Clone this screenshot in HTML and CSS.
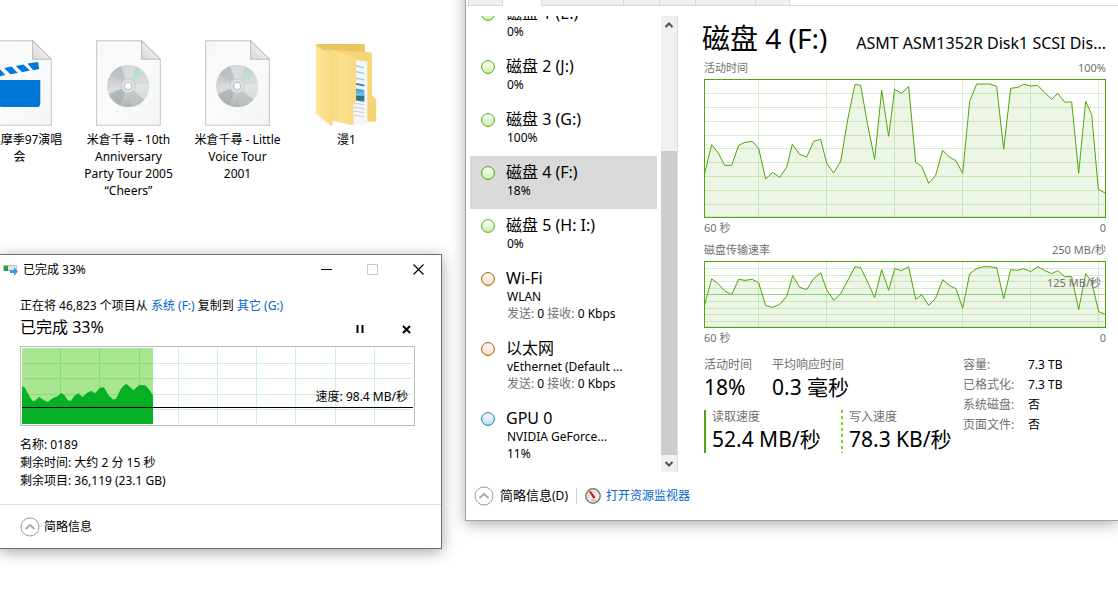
FILE: index.html
```html
<!DOCTYPE html>
<html lang="zh-CN">
<head>
<meta charset="utf-8">
<title>桌面</title>
<link rel="stylesheet" href="styles.css">
</head>
<body>
<div class="desktop">
  <svg class="defs" width="0" height="0" aria-hidden="true">
    <defs>
      <linearGradient id="paper" x1="0" y1="0" x2="1" y2="1"><stop offset="0" stop-color="#f6f7f7"/><stop offset=".5" stop-color="#fafbfb"/><stop offset="1" stop-color="#f2f4f7"/></linearGradient>
      <linearGradient id="fold" x1="0" y1="1" x2=".7" y2=".3"><stop offset="0" stop-color="#d6d6d6"/><stop offset="1" stop-color="#f4f4f4"/></linearGradient>
      <linearGradient id="silver" x1=".3" y1="0" x2=".6" y2="1"><stop offset="0" stop-color="#bcc3c4"/><stop offset=".5" stop-color="#d9dddd"/><stop offset="1" stop-color="#a9adad"/></linearGradient>
      <linearGradient id="flapA" x1="0" y1="0" x2="1" y2="0"><stop offset="0" stop-color="#ffe69a"/><stop offset="1" stop-color="#f8d87b"/></linearGradient>
      <linearGradient id="flapB" x1="0" y1="0" x2="1" y2="0"><stop offset="0" stop-color="#f3d077"/><stop offset=".5" stop-color="#fbdf8c"/><stop offset="1" stop-color="#f9d97d"/></linearGradient>
      <linearGradient id="photo" x1="0" y1="0" x2="0" y2="1"><stop offset="0" stop-color="#2f93d8"/><stop offset=".5" stop-color="#79c4ec"/><stop offset=".6" stop-color="#3f7068"/><stop offset="1" stop-color="#2276b4"/></linearGradient>
      <linearGradient id="dotGreen" x1="0" y1="0" x2="0" y2="1"><stop offset="0" stop-color="#fff"/><stop offset="1" stop-color="#c9f2ac"/></linearGradient>
      <linearGradient id="dotBrown" x1="0" y1="0" x2="0" y2="1"><stop offset="0" stop-color="#fff"/><stop offset="1" stop-color="#fbdcc4"/></linearGradient>
      <linearGradient id="dotBlue" x1="0" y1="0" x2="0" y2="1"><stop offset="0" stop-color="#fff"/><stop offset="1" stop-color="#b9dcf4"/></linearGradient>
      <symbol id="disc-file" viewBox="288 31 194 256">
        <path d="M290 33h134l56 55v197H290z" fill="url(#paper)" stroke="#c3c3c3" stroke-width="3"/>
        <path d="M424 33v55h56z" fill="url(#fold)" stroke="#bdbdbd" stroke-width="3"/>
        <circle cx="384" cy="168" r="63" fill="url(#silver)"/>
        <path d="M384 168L330 136A63 63 0 0 1 362 109z" fill="#b3babb" opacity=".55"/>
        <path d="M384 168L362 109A63 63 0 0 1 408 110z" fill="#e6eaea" opacity=".5"/>
        <path d="M384 168L446 158A63 63 0 0 1 432 209z" fill="#eef0f0" opacity=".6"/>
        <path d="M384 168L432 209A63 63 0 0 1 392 231z" fill="#c2c6c6" opacity=".7"/>
        <path d="M384 168L360 226A63 63 0 0 1 326 192z" fill="#a0a5a5" opacity=".6"/>
        <path d="M384 168L324 150A63 63 0 0 1 328 142z" fill="#e6b5e6" opacity=".9"/>
        <path d="M384 168L419 118A63 63 0 0 1 428 124z" fill="#a8ebb8" opacity=".9"/>
        <circle cx="384" cy="168" r="21" fill="#dfe3e3" stroke="#c7cccc" stroke-width="3"/>
        <circle cx="384" cy="168" r="11" fill="#fff" stroke="#bdc5c5" stroke-width="4"/>
      </symbol>
    </defs>
  </svg>

  <div class="files">
    <div class="file">
      <svg class="file-icon" viewBox="-39 31 194 256" aria-hidden="true">
        <path d="M-37 33H97l56 55v197H-37z" fill="url(#paper)" stroke="#c3c3c3" stroke-width="3"/>
        <path d="M97 33v55h56z" fill="url(#fold)" stroke="#bdbdbd" stroke-width="3"/>
        <path d="M-4 150H120v70q0 11-11 11H7q-11 0-11-11z" fill="#0078d7"/>
        <path d="M82 101l31-5 4 21-18 4zM47 108l23-4 19 18-23 5zM12 114l22-4 19 19-22 4zM-6 118l5-1 17 18-21 5z" fill="#0078d7"/>
      </svg>
      <span class="file-name">大黑摩季97演唱<br>会</span>
    </div>
    <div class="file">
      <svg class="file-icon" aria-hidden="true"><use href="#disc-file"/></svg>
      <span class="file-name">米倉千尋 - 10th<br>Anniversary<br>Party Tour 2005<br>“Cheers”</span>
    </div>
    <div class="file">
      <svg class="file-icon" aria-hidden="true"><use href="#disc-file"/></svg>
      <span class="file-name">米倉千尋 - Little<br>Voice Tour<br>2001</span>
    </div>
    <div class="file">
      <svg class="file-icon" viewBox="371 31 194 260" aria-hidden="true">
        <path d="M375 46l6-3H519q5 0 5 5V270H430z" fill="#e9c465"/>
        <path d="M400 60L540 68q5 0 5 5V198l13 14v62q0 4-5 4H440z" fill="#f6d577"/>
        <path d="M480 90l51 6V286H480z" fill="#f3f5f7"/>
        <path d="M494 108l27 7M494 126l28 6M494 146l28 6" stroke="#7fbfe6" stroke-width="3"/>
        <path d="M494 163l28 6" stroke="#1f86cc" stroke-width="5"/>
        <path d="M492 177l30 5v36l-30-5z" fill="url(#photo)"/>
        <path d="M490 222l32 5M490 234l32 5M490 246l32 5M490 258l32 5" stroke="#c9cdd1" stroke-width="3"/>
        <path d="M402 56L494 83q3 2 3 6V213l-8 12v60q-2 5-7 3L402 270z" fill="url(#flapB)"/>
        <path d="M375 47L427 79q3 2 3 6V216l-4 10v61q0 5-5 3L375 253z" fill="url(#flapA)"/>
      </svg>
      <span class="file-name">漫1</span>
    </div>
  </div>

  <section class="copy-window" aria-label="复制进度">
    <header class="titlebar">
      <svg width="15" height="12" viewBox="0 0 15 12" aria-hidden="true">
        <path d="M.5 1.5h13v5H.500z" fill="#e4e4e4" stroke="#bdbdbd"/><path d="M1 2h4v5H1z" fill="#20a43a"/>
        <path d="M7 6h4V3l4 4.500-4 4.500V9H7z" fill="#3c97e4"/>
      </svg>
      <h1 class="window-title">已完成 33%</h1>
      <div class="caption-buttons">
        <button class="caption-button" aria-label="最小化"><svg width="11" height="11"><path d="M0 5.500h11" stroke="#000"/></svg></button>
        <button class="caption-button" aria-label="最大化" disabled><svg width="11" height="11"><path d="M.5.500h10v10H.500z" fill="none" stroke="#c8c8c8"/></svg></button>
        <button class="caption-button" aria-label="关闭"><svg width="11" height="11"><path d="M.5.500l10 10M10.500.500l-10 10" stroke="#000" stroke-width="1.200"/></svg></button>
      </div>
    </header>
    <div class="copy-body">
      <p class="copy-route">正在将 46,823 个项目从 <a href="#f">系统 (F:)</a> 复制到 <a href="#g">其它 (G:)</a></p>
      <div class="copy-status">
        <h2 class="copy-percent">已完成 33%</h2>
        <button class="icon-button" aria-label="暂停"><svg width="8" height="8"><path d="M1.500 0v8M6.500 0v8" stroke="#000" stroke-width="2"/></svg></button>
        <button class="icon-button" aria-label="取消"><svg width="9" height="9"><path d="M1 1l7 7M8 1L1 8" stroke="#000" stroke-width="2"/></svg></button>
      </div>
      <div class="speed-chart">
        <svg class="speed-plot" viewBox="66 294 1173 228" preserveAspectRatio="none" aria-hidden="true">
          <path class="fill-done" d="M66 294H459V522H66z"/>
          <path class="speed-grid" d="M181.500 294V522M298.500 294V522M418.500 294V522M535.500 294V522M652.500 294V522M769.500 294V522M886.500 294V522M1006.500 294V522M1123.500 294V522M66 340.500H1236M66 385.500H1236M66 433.500H1236M66 478.500H1236"/>
          <path class="fill-speed" d="M66 522V408L75 414 90 442 98 453 105 452 117 441 130 449 143 456 158 445 172 439 185 429 195 437 203 451 213 452 222 439 235 430 248 441 260 430 273 422 285 430 300 413 312 412 325 435 340 449 349 445 362 418 372 406 380 402 390 411 400 421 418 405 436 406 447 418 459 437V522z"/>
          <path class="speed-line" d="M66 472.500H1239"/>
        </svg>
        <span class="speed-label">速度: 98.4 MB/秒</span>
      </div>
      <div class="copy-details">
        <p>名称: 0189</p>
        <p>剩余时间: 大约 2 分 15 秒</p>
        <p>剩余项目: 36,119 (23.1 GB)</p>
      </div>
    </div>
    <footer class="copy-footer">
      <button class="toggle"><svg width="20" height="20" viewBox="0 0 20 20" aria-hidden="true"><circle cx="10" cy="10" r="9" fill="#fff" stroke="#9a9a9a"/><path d="M5.500 12l4.500-4 4.500 4" fill="none" stroke="#a8a8a8" stroke-width="2"/></svg>简略信息</button>
    </footer>
  </section>

  <section class="task-window" aria-label="任务管理器">
    <nav class="tabs">
      <button class="tab tab-process">进程</button>
      <button class="tab tab-perf is-active">性能</button>
      <button class="tab tab-history">应用历史记录</button>
      <button class="tab tab-start">启动</button>
      <button class="tab tab-user">用户</button>
      <button class="tab tab-detail">详细信息</button>
      <button class="tab tab-service">服务</button>
    </nav>
    <div class="task-body">
      <aside class="sidebar">
        <ul class="devices">
          <li class="device"><svg class="dot" viewBox="0 0 14 14"><circle cx="7" cy="7" r="6.400" fill="url(#dotGreen)" stroke="#4da60c"/></svg><div><h3>磁盘 1 (E:)</h3><p>0%</p></div></li>
          <li class="device"><svg class="dot" viewBox="0 0 14 14"><circle cx="7" cy="7" r="6.400" fill="url(#dotGreen)" stroke="#4da60c"/></svg><div><h3>磁盘 2 (J:)</h3><p>0%</p></div></li>
          <li class="device"><svg class="dot" viewBox="0 0 14 14"><circle cx="7" cy="7" r="6.400" fill="url(#dotGreen)" stroke="#4da60c"/></svg><div><h3>磁盘 3 (G:)</h3><p>100%</p></div></li>
          <li class="device is-selected"><svg class="dot" viewBox="0 0 14 14"><circle cx="7" cy="7" r="6.400" fill="url(#dotGreen)" stroke="#4da60c"/></svg><div><h3>磁盘 4 (F:)</h3><p>18%</p></div></li>
          <li class="device"><svg class="dot" viewBox="0 0 14 14"><circle cx="7" cy="7" r="6.400" fill="url(#dotGreen)" stroke="#4da60c"/></svg><div><h3>磁盘 5 (H: I:)</h3><p>0%</p></div></li>
          <li class="device"><svg class="dot" viewBox="0 0 14 14"><circle cx="7" cy="7" r="6.400" fill="url(#dotBrown)" stroke="#a74f01"/></svg><div><h3>Wi-Fi</h3><p>WLAN</p><p><span class="dim">发送:</span> 0 <span class="dim">接收:</span> 0 Kbps</p></div></li>
          <li class="device"><svg class="dot" viewBox="0 0 14 14"><circle cx="7" cy="7" r="6.400" fill="url(#dotBrown)" stroke="#a74f01"/></svg><div><h3>以太网</h3><p>vEthernet (Default ...</p><p><span class="dim">发送:</span> 0 <span class="dim">接收:</span> 0 Kbps</p></div></li>
          <li class="device"><svg class="dot" viewBox="0 0 14 14"><circle cx="7" cy="7" r="6.400" fill="url(#dotBlue)" stroke="#117dbb"/></svg><div><h3>GPU 0</h3><p>NVIDIA GeForce...</p><p>11%</p></div></li>
        </ul>
        <div class="scrollbar">
          <svg class="scroll-arrow" viewBox="0 0 16 17" aria-hidden="true"><path d="M4.500 11L8 7.500l3.500 3.500" fill="none" stroke="#505050" stroke-width="2"/></svg>
          <div class="scroll-space"></div>
          <div class="scroll-thumb"></div>
          <svg class="scroll-arrow" viewBox="0 0 16 17" aria-hidden="true"><path d="M4.500 7L8 10.500 11.500 7" fill="none" stroke="#505050" stroke-width="2"/></svg>
        </div>
      </aside>
      <main class="detail">
        <header class="detail-head"><h2 class="detail-title">磁盘 4 (F:)</h2><span class="detail-model">ASMT ASM1352R Disk1 SCSI Dis...</span></header>
        <div class="graph">
          <div class="caption"><span>活动时间</span><span>100%</span></div>
          <div class="plot plot-tall">
            <svg class="plot-svg" viewBox="27 28 1206 417" preserveAspectRatio="none" aria-hidden="true">
              <path class="grid" d="M190.500 28V445M394.500 28V445M598.500 28V445M802.500 28V445M1006.500 28V445M1210.500 28V445M27 71.500H1227M27 113.500H1227M27 155.500H1227M27 196.500H1227M27 236.500H1227M27 278.500H1227M27 320.500H1227M27 362.500H1227M27 404.500H1227"/>
              <path class="area" d="M28 443V315L50 225 70 250 89 287 110 287 131 227 150 218 172 215 191 236 212 328 233 308 254 323 275 293 292 224 314 254 335 262 356 215 377 209 395 280 416 310 437 275 459 145 480 44 497 47 518 165 539 269 560 62 581 200 599 59 620 71 641 50 662 278 680 290 701 341 722 317 743 242 764 263 783 273 803 311 824 95 845 43 884 43 905 50 926 239 947 56 968 53 986 44 1007 49 1028 47 1050 69 1070 89 1088 71 1109 97 1130 97 1151 311 1172 95 1190 134 1210 359 1232 371V443z"/>
              <path class="frame" d="M28.500 29.500H1231.500V443.500H28.500z"/>
            </svg>
          </div>
          <div class="caption caption-axis"><span>60 秒</span><span>0</span></div>
        </div>
        <div class="graph">
          <div class="caption"><span>磁盘传输速率</span><span>250 MB/秒</span></div>
          <div class="plot plot-short">
            <svg class="plot-svg" viewBox="27 78 1206 201" preserveAspectRatio="none" aria-hidden="true">
              <path class="grid" d="M190.500 78V279M394.500 78V279M598.500 78V279M802.500 78V279M1006.500 78V279M1210.500 78V279M27 100.500H1227M27 121.500H1227M27 139.500H1227M27 160.500H1227M27 199.500H1227M27 220.500H1227M27 238.500H1227M27 259.500H1227"/>
              <path class="grid-mid" d="M27 178.500H1232"/>
              <path class="area" d="M28 277V213L50 131 70 147 89 167 110 179 131 133 150 136 172 133 191 143 212 212 233 217 254 208 275 184 293 122 314 157 335 164 356 131 377 113 395 164 416 196 437 176 459 135 480 95 497 98 518 141 539 188 560 104 581 166 599 101 620 107 641 95 662 193 680 179 701 211 722 190 743 134 764 152 783 161 803 220 824 116 845 101 866 95 884 95 905 98 926 191 947 104 968 106 986 101 1007 110 1028 95 1050 107 1070 116 1088 107 1109 125 1130 125 1151 224 1172 116 1190 140 1211 230 1232 238V277z"/>
              <path class="frame" d="M28.500 79.500H1231.500V277.500H28.500z"/>
            </svg>
            <span class="mid-label">125 MB/秒</span>
          </div>
          <div class="caption caption-axis"><span>60 秒</span><span>0</span></div>
        </div>
        <div class="stats">
          <div class="stats-main">
            <div class="stat-row">
              <div class="stat stat-active"><span class="stat-label">活动时间</span><span class="stat-value">18%</span></div>
              <div class="stat"><span class="stat-label">平均响应时间</span><span class="stat-value">0.3 毫秒</span></div>
            </div>
            <div class="stat-row">
              <div class="stat stat-read"><span class="stat-label">读取速度</span><span class="stat-value">52.4 MB/秒</span></div>
              <div class="stat stat-write"><span class="stat-label">写入速度</span><span class="stat-value">78.3 KB/秒</span></div>
            </div>
          </div>
          <dl class="facts">
            <dt>容量:</dt><dd>7.3 TB</dd>
            <dt>已格式化:</dt><dd>7.3 TB</dd>
            <dt>系统磁盘:</dt><dd>否</dd>
            <dt>页面文件:</dt><dd>否</dd>
          </dl>
        </div>
      </main>
    </div>
    <footer class="task-footer">
      <button class="toggle toggle-large"><svg width="20" height="20" viewBox="0 0 20 20" aria-hidden="true"><circle cx="10" cy="10" r="9" fill="#fff" stroke="#9a9a9a"/><path d="M5.500 12l4.500-4 4.500 4" fill="none" stroke="#a8a8a8" stroke-width="2"/></svg><span>简略信息<small>(D)</small></span></button>
      <a class="monitor-link" href="#monitor"><svg width="16" height="16" viewBox="0 0 16 16" aria-hidden="true"><circle cx="8" cy="8" r="7.200" fill="#f2f0e6" stroke="#777" stroke-width="1.500"/><path d="M3.500 10A5 5 0 0 1 12.500 6" fill="none" stroke="#999" stroke-dasharray="1 1"/><path d="M6 12.500h5" stroke="#b5b5a8" stroke-width="1.500"/><path d="M4 3.500l1.500-.800L10.500 9l-2 2z" fill="#d11a1a"/></svg>打开资源监视器</a>
    </footer>
  </section>
</div>
</body>
</html>
```
FILE: styles.css
```css
* { box-sizing: border-box; }
body {
  margin: 0;
  background: #fff;
  color: #000;
  font: 12px/18px "Noto Sans", "Noto Sans CJK SC", sans-serif;
}
h1, h2, h3, p, ul, dl, dd { margin: 0; padding: 0; font-weight: 400; }
button { border: 0; padding: 0; background: none; color: inherit; font: inherit; }
a { color: #0066cc; text-decoration: none; }
svg { display: block; flex: none; }
.defs { position: absolute; }

.desktop { position: relative; min-height: 100vh; overflow: hidden; }

/* desktop files */
.files { display: flex; margin-left: -35px; padding-top: 40px; }
.file { width: 109px; display: flex; flex-direction: column; align-items: center; gap: 5px; flex: none; }
.file-icon { width: 65px; height: 86px; }
.file-name { line-height: 17px; text-align: center; white-space: nowrap; }

/* copy dialog */
.copy-window {
  position: absolute;
  left: 0;
  top: 254px;
  width: 442px;
  background: #fff;
  border: 1px solid #6e6e6e;
  border-left: 0;
  box-shadow: 0 3px 14px rgba(0, 0, 0, .36);
}
.titlebar { display: flex; align-items: center; gap: 5px; height: 29px; padding-left: 3px; }
.window-title { font-size: 12px; flex: 1; }
.caption-buttons { display: flex; }
.caption-button { width: 46px; height: 29px; display: grid; place-items: center; }
.copy-body { padding: 13px 26px 14px 20px; }
.copy-status { display: flex; align-items: center; gap: 30px; height: 28px; padding-right: 1px; }
.copy-percent { flex: 1; font-size: 16px; line-height: 24px; padding-bottom: 4px; }
.icon-button { width: 16px; height: 20px; display: grid; place-items: center; }
.speed-chart { position: relative; border: 1px solid #bcbcbc; background: #fff; padding: 1px; margin-top: 3px; }
.speed-plot { width: 100%; height: 76px; }
.speed-plot path { vector-effect: non-scaling-stroke; }
.fill-done { fill: #a8e692; }
.fill-speed { fill: #06b025; }
.speed-grid { fill: none; stroke: #06b025; stroke-opacity: .2; shape-rendering: crispEdges; }
.speed-line { stroke: #000; shape-rendering: crispEdges; }
.speed-label { position: absolute; right: 6px; bottom: 19px; }
.copy-details { padding-top: 10px; }
.copy-footer { border-top: 1px solid #dfdfdf; padding: 12px 20px 11px; }
.toggle { display: flex; align-items: center; gap: 4px; }

/* task manager */
.task-window {
  position: absolute;
  left: 465px;
  right: 0;
  top: -21px;
  background: #fff;
  border: 1px solid #a3a3a3;
  border-right: 0;
  box-shadow: 0 3px 14px rgba(0, 0, 0, .32);
}
.tabs { display: flex; height: 26px; padding-left: 2px; border-bottom: 1px solid #d9d9d9; }
.tab { height: 25px; border-right: 1px solid #d9d9d9; background: #f0f0f0; line-height: 18px; overflow: hidden; white-space: nowrap; }
.tab.is-active { height: 26px; background: #fff; }
.tab-process { width: 35px; border-left: 1px solid #d9d9d9; }
.tab-perf { width: 39px; }
.tab-history { width: 82px; }
.tab-start, .tab-user { width: 36px; }
.tab-detail { width: 60px; }
.tab-service { width: 34px; }
.task-body { display: flex; }
.sidebar { display: flex; width: 212px; height: 456px; margin-top: 10px; padding-left: 4px; flex: none; }
.devices { flex: 1; list-style: none; overflow: hidden; display: flex; flex-direction: column; justify-content: flex-end; }
.device { display: flex; gap: 11px; padding: 6px 0 10px 11px; flex: none; white-space: nowrap; }
.device.is-selected { background: #d9d9d9; }
.device h3 { font-size: 16px; line-height: 20px; }
.device p { line-height: 17px; padding-left: 1px; }
.dot { width: 14px; height: 14px; margin-top: 4px; }
.dim { color: #707070; }
.scrollbar { width: 17px; margin-left: 4px; border-right: 1px solid #dcdcdc; background: #f0f0f0; display: flex; flex-direction: column; }
.scroll-arrow { width: 16px; height: 17px; }
.scroll-space { flex: 118; }
.scroll-thumb { flex: 304; background: #cdcdcd; }
.detail { flex: 1; min-width: 0; padding: 14px 12px 0 26px; }
.detail-head { display: flex; align-items: baseline; justify-content: space-between; height: 40px; margin-left: -2px; line-height: 36px; white-space: nowrap; }
.detail-title { font-size: 28px; }
.detail-model { font-size: 16px; }
.graph + .graph { margin-top: 6px; }
.caption { display: flex; justify-content: space-between; font-size: 11px; line-height: 16px; color: #707070; margin-bottom: 3px; }
.caption-axis { margin: 2px 0 0; }
.plot { position: relative; }
.plot-tall { height: 139px; }
.plot-short { height: 67px; }
.plot-svg { width: 100%; height: 100%; }
.plot-svg path { vector-effect: non-scaling-stroke; }
.grid { fill: none; stroke: #d8ebcb; shape-rendering: crispEdges; }
.grid-mid { stroke: #8fd684; shape-rendering: crispEdges; }
.area { fill: #4da60c; fill-opacity: .1; stroke: #4da60c; }
.frame { fill: none; stroke: #4da60c; shape-rendering: crispEdges; }
.mid-label { position: absolute; right: 5px; top: 14px; font-size: 11px; line-height: 16px; color: #707070; }
.stats { display: flex; padding-top: 12px; }
.stats-main { width: 259px; display: flex; flex-direction: column; gap: 9px; flex: none; }
.stat-row { display: flex; }
.stat { display: flex; flex-direction: column; gap: 1px; white-space: nowrap; }
.stat-label { line-height: 14px; color: #707070; }
.stat-value { font-size: 21px; line-height: 28px; }
.stat-active { width: 68px; }
.stat-read { width: 137px; border-left: 2px solid #4da60c; padding-left: 6px; }
.stat-write { padding-left: 8px; background: repeating-linear-gradient(#76d815 0 3px, transparent 3px 6px) left / 2px 100% no-repeat; }
.facts { display: grid; grid-template-columns: 65px auto; line-height: 20px; margin-top: -3px; align-content: start; }
.facts dt { color: #707070; }
.task-footer { display: flex; align-items: center; height: 48px; padding: 0 0 1px 8px; }
.toggle-large { gap: 6px; font-size: 13px; }
.toggle-large small { font-size: 12px; }
.monitor-link { display: flex; align-items: center; gap: 5px; margin-left: 8px; padding-left: 8px; border-left: 1px solid #d0d0d0; line-height: 14px; }
```
